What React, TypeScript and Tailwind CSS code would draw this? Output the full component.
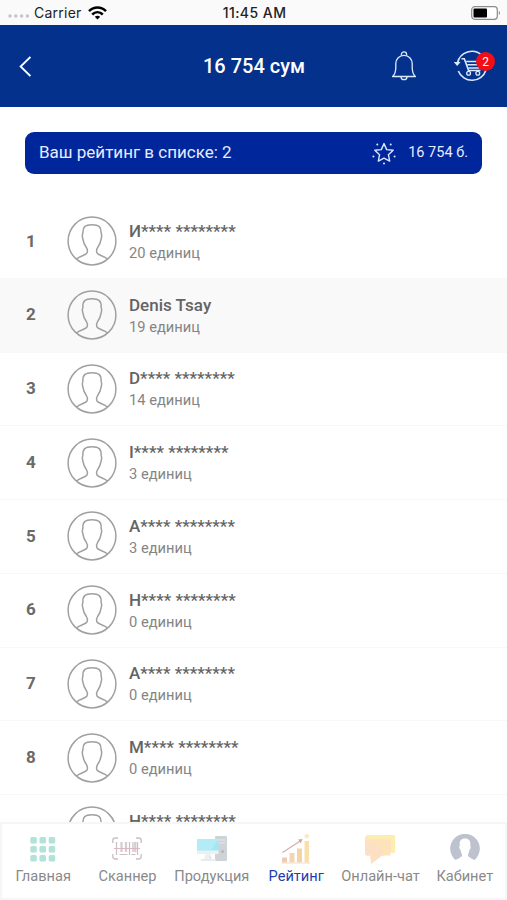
import React from 'react';

type Member = { place: number; name: string; units: number };

const members: Member[] = [
  { place: 1, name: 'И**** ********', units: 20 },
  { place: 2, name: 'Denis Tsay', units: 19 },
  { place: 3, name: 'D**** ********', units: 14 },
  { place: 4, name: 'I**** ********', units: 3 },
  { place: 5, name: 'A**** ********', units: 3 },
  { place: 6, name: 'Н**** ********', units: 0 },
  { place: 7, name: 'А**** ********', units: 0 },
  { place: 8, name: 'М**** ********', units: 0 },
  { place: 9, name: 'Н**** ********', units: 0 },
];

const MY_PLACE = 2;

const Avatar: React.FC = () => (
  <svg className="h-[50px] w-[50px] shrink-0" viewBox="0 0 50 50" fill="none" stroke="#a0a0a0" strokeWidth="1.5">
    <circle cx="25" cy="25" r="23.9" />
    <path d="M9.5 43C13.5 39.5 19.2 39.5 20.2 36.5C20.8 34.5 20.4 33 19.2 31.2C17.2 28.5 16.4 26.5 15.9 23.2C15.2 21 15.1 18.8 15.9 17C15.6 11 18 8.7 25 8.7S34.4 11 34.1 17C34.9 18.8 34.8 21 34.1 23.2C33.6 26.5 32.8 28.5 30.8 31.2C29.6 33 29.2 34.5 29.8 36.5C30.8 39.5 36.5 39.5 40.5 43" />
  </svg>
);

const StatusBar: React.FC = () => (
  <div className="flex h-[25px] shrink-0 items-center justify-between bg-[#fafafa] pr-1.5 pl-2 font-['Inter',sans-serif] text-[14px] text-[#222]">
    <div className="flex w-40 items-center">
      <svg className="mt-[7px] h-1 w-[22px]" viewBox="0 0 22 4" fill="#c4c4c4">
        <circle cx="2" cy="2" r="1.7" />
        <circle cx="7.8" cy="2" r="1.7" />
        <circle cx="13.6" cy="2" r="1.7" />
        <circle cx="19.4" cy="2" r="1.7" />
      </svg>
      <span className="ml-1 tracking-[0.25px]">Carrier</span>
      <svg className="ml-1.5 h-3.5 w-[19px]" viewBox="0 0 19 14" fill="none" stroke="#000" strokeWidth="2.5">
        <path d="M1 5.2C6 .3 13 .3 18 5.2" />
        <path d="M4.2 8.5C7.3 5.5 11.7 5.5 14.8 8.5" />
        <path d="M9.5 13.5L6.8 10.8C8.4 9.4 10.6 9.4 12.2 10.8Z" fill="#000" stroke="none" />
      </svg>
    </div>
    <span className="font-medium tracking-[0.45px]">11:45 AM</span>
    <div className="flex w-40 justify-end">
      <svg className="h-3.5 w-[30px]" viewBox="0 0 30 14">
        <rect x=".7" y=".7" width="25.6" height="12.6" rx="3" fill="#fff" stroke="#8b8b8b" strokeWidth="1.2" />
        <rect x="2.5" y="2.5" width="13.5" height="9" rx="1" fill="#000" />
        <path d="M27.8 5v4c1.6-.7 1.6-3.3 0-4z" fill="#8b8b8b" />
      </svg>
    </div>
  </div>
);

const Header: React.FC = () => (
  <header className="flex h-[82px] shrink-0 items-center justify-between bg-[#04318c] pr-3 pl-[13px] text-white">
    <button className="flex w-[120px] pl-1.5" aria-label="Назад">
      <svg className="h-[21px] w-3" viewBox="0 0 12 21" fill="none" stroke="#fff" strokeWidth="1.8">
        <path d="M11.4 1L1.6 10.5L11.4 20" />
      </svg>
    </button>
    <h1 className="text-xl font-medium">16 754 сум</h1>
    <div className="flex w-[120px] items-center justify-end">
      <button aria-label="Уведомления">
        <svg className="h-[30px] w-[26px]" viewBox="0 0 26 30" fill="none" stroke="#dceaff" strokeWidth="1.3" strokeLinejoin="round">
          <path d="M10.4 4.6V3.5a2.6 2.6 0 0 1 5.2 0v1.1" />
          <path d="M1.6 25.5C3.8 23.5 4.8 20.3 4.8 16.5V12.5a8.2 8.2 0 0 1 16.4 0v4C21.2 20.3 22.2 23.5 24.4 25.5Z" />
          <path d="M10 25.7a3 3 0 0 0 6 0" />
        </svg>
      </button>
      <button className="relative ml-9" aria-label="Корзина">
        <svg className="h-8 w-[42px]" viewBox="0 0 42 32" fill="none" stroke="#dceaff" strokeWidth="1.6">
          <path d="M4.5 13A14.7 14.7 0 0 1 29 5.4" />
          <path d="M5.3 21A14.7 14.7 0 0 0 33 20" />
          <path d="M.8 12H7.6L4.2 16Z" fill="#dceaff" stroke="none" />
          <path d="M8.5 8.7H11.3L15.6 20.5H27.5" />
          <path d="M13.2 11.5H28L26 18H15.3M14.2 14.8H27" strokeWidth="1.4" />
          <circle cx="15.6" cy="23.3" r="1.9" strokeWidth="1.3" />
          <circle cx="24.8" cy="23.3" r="1.9" strokeWidth="1.3" />
        </svg>
        <span className="absolute top-[2px] right-0 flex h-[19px] w-[19px] items-center justify-center rounded-full bg-[#f30d16] text-xs">
          2
        </span>
      </button>
    </div>
  </header>
);

const MyRating: React.FC = () => (
  <div className="mx-[25px] mt-[25px] flex h-[42px] shrink-0 items-center rounded-[9px] bg-[#00269b] pr-[14px] pl-[14px] text-[#e6ecff]">
    <span className="flex-1 text-[17px]">Ваш рейтинг в списке: {MY_PLACE}</span>
    <svg className="mr-[12px] h-6 w-6" viewBox="0 0 24 24" fill="none" stroke="#dfe7ff" strokeWidth="1.4" strokeLinejoin="round">
      <path d="M12 2.6L14.7 8.6L21.2 9.3L16.4 13.7L17.7 20.1L12 17.2L6.3 20.1L7.6 13.7L2.8 9.3L9.3 8.6Z" />
      <g fill="#dfe7ff" stroke="none">
        <circle cx="5.3" cy="3.5" r="1" />
        <circle cx="18.7" cy="3.5" r="1" />
        <circle cx="1.4" cy="15.5" r="1" />
        <circle cx="22.6" cy="15.5" r="1" />
        <circle cx="12" cy="22.6" r="1" />
      </g>
    </svg>
    <span className="text-[14.5px]">16 754 б.</span>
  </div>
);

const MemberRow: React.FC<{ member: Member }> = ({ member }) => (
  <li
    className={`flex h-[73.75px] shrink-0 items-center border-b border-[#f8f8f8] pl-[26px] ${
      member.place === MY_PLACE ? 'bg-[#f9f9f9]' : ''
    }`}
  >
    <span className="w-[41px] text-[17px] font-bold text-[#6a6a6a]">{member.place}</span>
    <Avatar />
    <div className="ml-3 pt-px">
      <div className="text-[17px] leading-[22px] font-medium text-[#646464]">{member.name}</div>
      <div className="text-[14.7px] leading-[22px] text-[#858585]">{member.units} единиц</div>
    </div>
  </li>
);

const HomeIcon: React.FC = () => (
  <svg className="h-[30px] w-[30px]" viewBox="0 0 30 30" fill="#b2e2d8">
    {[3, 12, 21].map((y) =>
      [2.3, 11.5, 20.7].map((x) => <rect key={`${x}-${y}`} x={x} y={y} width="6.5" height="6.5" rx="1.5" />)
    )}
  </svg>
);

const ScannerIcon: React.FC = () => (
  <svg className="h-[30px] w-[30px]" viewBox="0 0 30 30" fill="none" stroke="#c9bfc4">
    <path d="M.8 9V6.5Q.8 4 3.5 4H6M24 4h2.5q2.7 0 2.7 2.5V9M.8 20v2.5q0 2.5 2.7 2.5H6M24 25h2.5q2.7 0 2.7-2.5V20" strokeWidth="1.3" />
    <path d="M4.5 8V21M17.5 8V21M21 8V18M25.5 8V21" strokeWidth="1.2" />
    <path d="M9.5 8V18M14 8V18M23.3 8V18" strokeWidth="2.2" stroke="#d6cbd0" />
    <path d="M7.5 20.5H15.5M19.5 20.5H23.5" strokeWidth="1.2" />
    <path d="M2 14.5H28" stroke="#d9b9bf" strokeWidth="1" />
  </svg>
);

const ProductsIcon: React.FC = () => (
  <svg className="h-[30px] w-[30px]" viewBox="0 0 30 30">
    <rect x="18" y="2" width="12" height="25" rx="1" fill="#cfd3d8" />
    <path d="M21 6H28M21 9H28" stroke="#e6e9ec" strokeWidth="1.2" />
    <circle cx="25.5" cy="17.5" r="1.5" fill="#b0b8c0" />
    <rect y="5" width="21.5" height="12.5" fill="#a5e6f4" />
    <path d="M0 5H21.5L14 16H0Z" fill="#b2ecf7" />
    <path d="M0 16.5H21.5V20H0Z" fill="#eaf1f4" />
    <path d="M8 20H14L15 25H7Z" fill="#edf1f3" />
    <path d="M4 26H19" stroke="#dfe6ea" strokeWidth="1.5" />
    <path d="M12 22.5L14 24" stroke="#b9e5ef" />
  </svg>
);

const RatingIcon: React.FC = () => (
  <svg className="h-[30px] w-[30px] overflow-visible" viewBox="0 0 30 30">
    <rect x="1" y="23.5" width="5" height="5" fill="#f0cbb2" />
    <rect x="8.5" y="19" width="5" height="9.5" fill="#f5d4b2" />
    <rect x="16" y="14.5" width="5" height="14" fill="#f5d3a8" />
    <rect x="23.5" y="7" width="4.5" height="21.5" fill="#f9dfac" />
    <path d="M.5 29H29" stroke="#f4dcc2" />
    <path d="M25.8-1L26.7.8L29 1.2L27.3 2.7L27.7 5L25.8 3.8L23.8 5L24.2 2.7L22.5 1.2L24.8.8Z" fill="#fbeab8" />
    <path d="M1.5 18.5L20 6.5" stroke="#d1b0b0" strokeWidth="1.3" />
    <path d="M17 5.4L21.7 5L19.8 9.2Z" fill="#d9a3a0" />
  </svg>
);

const ChatIcon: React.FC = () => (
  <svg className="h-[30px] w-[30px]" viewBox="0 0 30 30">
    <path d="M4 1H30V18.5H25.5V21.5H17L6 30L5.5 21.5H2Q0 21.5 0 19V5Q0 1 4 1Z" fill="#fde3b9" />
    <path d="M4 1H30V18.5H26V5.5H2Q2 1 4 1Z" fill="#feedb2" />
    <path d="M0 8Q14 6 19 21.5H17L6 30L5.5 21.5H2Q0 21.5 0 19Z" fill="#fddfc4" />
  </svg>
);

const ProfileIcon: React.FC = () => (
  <svg className="h-[30px] w-[30px]" viewBox="0 0 30 30">
    <path d="M5.5 26A14.8 14.8 0 1 1 24.5 26C22 24.5 18.2 23.3 18 21.5C17.9 19.8 19.2 19 19.6 15.5C21 14.5 21 12.5 20.2 11.5C21 6.5 18.5 4.5 15 4.5S9 6.5 9.8 11.5C9 12.5 9 14.5 10.4 15.5C10.8 19 12.1 19.8 12 21.5C11.8 23.3 8 24.5 5.5 26Z" fill="#bec2cf" />
  </svg>
);

const tabs = [
  { label: 'Главная', icon: HomeIcon },
  { label: 'Сканнер', icon: ScannerIcon },
  { label: 'Продукция', icon: ProductsIcon },
  { label: 'Рейтинг', icon: RatingIcon, active: true },
  { label: 'Онлайн-чат', icon: ChatIcon },
  { label: 'Кабинет', icon: ProfileIcon },
];

const TabBar: React.FC = () => (
  <nav className="grid h-[78px] shrink-0 grid-cols-6 bg-white pt-3 pl-px shadow-[inset_0_0_0_2px_#f6f6f6]">
    {tabs.map((tab) => (
      <button key={tab.label} className="flex flex-col items-center">
        <tab.icon />
        <span
          className={`mt-0.5 text-[14.6px] leading-5 whitespace-nowrap ${
            tab.active ? 'text-[#1c3fae]' : 'text-[#8a8a8a]'
          }`}
        >
          {tab.label}
        </span>
      </button>
    ))}
  </nav>
);

const App: React.FC = () => {
  return (
    <div className="flex h-[900px] w-[507px] flex-col overflow-hidden bg-white font-['Roboto',sans-serif]">
      <StatusBar />
      <Header />
      <MyRating />
      <ul className="mt-[31px] flex min-h-0 flex-1 flex-col overflow-hidden">
        {members.map((member) => (
          <MemberRow key={member.place} member={member} />
        ))}
      </ul>
      <TabBar />
    </div>
  );
};

export default App;
